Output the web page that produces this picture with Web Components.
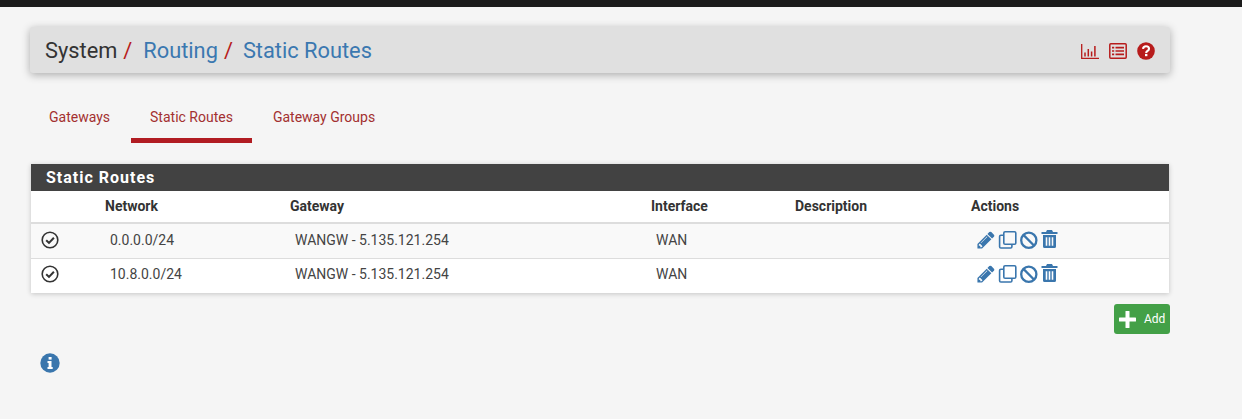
<!DOCTYPE html>
<html><head><meta charset="utf-8">
<style>
html,body{margin:0;padding:0;background:#f5f5f5;font-family:Roboto,sans-serif;color:#333;}
body{width:1242px;height:419px;overflow:hidden;}
</style></head><body>
<top-bar></top-bar>
<page-main>
  <bread-crumb></bread-crumb>
  <tab-bar></tab-bar>
  <routes-panel title="Static Routes">
    <route-row network="0.0.0.0/24" gateway="WANGW - 5.135.121.254" iface="WAN" shade></route-row>
    <route-row network="10.8.0.0/24" gateway="WANGW - 5.135.121.254" iface="WAN"></route-row>
  </routes-panel>
  <add-bar></add-bar>
  <info-mark></info-mark>
</page-main>
<script>
const PENCIL='<svg width="20" height="20" viewBox="0 0 1792 1792" fill="currentColor"><path d="M491 1536l91-91-235-235-91 91v107h128v128h107zm523-928q0-22-22-22-10 0-17 7l-542 542q-7 7-7 17 0 22 22 22 10 0 17-7l542-542q7-7 7-17zm-54-192l416 416-832 832h-416v-416zm683 96q0 53-37 90l-166 166-416-416 166-165q36-38 90-38 53 0 91 38l235 234q37 39 37 91z"/></svg>';
const CLONE='<svg style="margin-left:1px" width="20" height="20" viewBox="0 0 20 20" fill="none" stroke="currentColor" stroke-width="1.6"><rect x="5.800" y="1.800" width="12" height="12.500" rx="1.300"/><path d="M5.800 5.200H2.900A1.300 1.300 0 0 0 1.600 6.500v10.200a1.300 1.300 0 0 0 1.300 1.300h9.700a1.300 1.300 0 0 0 1.300-1.300v-2.400"/></svg>';
const BAN='<svg width="19" height="20" viewBox="0 0 19 20" fill="none" stroke="currentColor" stroke-width="2.300"><circle cx="9.800" cy="10.300" r="7.600"/><path d="M4.400 4.900l10.800 10.800"/></svg>';
const TRASH='<svg style="margin:0 0 2px 2px" width="17" height="20" viewBox="0 0 17 20" fill="currentColor"><path d="M6 1h5l1 2h4.500v2H.5V3H5z"/><path fill-rule="evenodd" d="M2 6h13v11.500a1.500 1.500 0 0 1-1.500 1.500h-10A1.500 1.500 0 0 1 2 17.500zm2.700 2.200v8.600h1.600V8.200zm3 0v8.600h1.600V8.200zm3 0v8.600h1.600V8.200z"/></svg>';
const CHECK='<svg width="18" height="18" viewBox="0 0 18 18" fill="none" stroke="#333" stroke-width="1.600"><circle cx="9" cy="9" r="7.800"/><path d="M5.200 9.200l2.800 2.700 4.900-5.200" stroke-width="2"/></svg>';

function def(name,html){
  customElements.define(name,class extends HTMLElement{
    connectedCallback(){
      if(this.shadowRoot)return;
      const r=this.attachShadow({mode:'open'});
      r.innerHTML=typeof html==='function'?html(this):html;
    }
  });
}
def('top-bar','<style>:host{display:block;height:7px;background:#1c1c1c}</style>');
def('page-main','<style>:host{display:block;width:1140px;padding:20px 0 0 30px}</style><slot></slot>');
def('bread-crumb',`<style>
:host{display:flex;align-items:center;justify-content:space-between;height:46px;padding:0 15px;box-sizing:border-box;background:#e0e0e0;border-radius:3px;box-shadow:0 2px 8px rgba(0,0,0,.3);font-size:21.800px;line-height:46px}
.t{display:flex;padding-top:1px}.s{color:#b71c1c;margin:0 11px 0 6px}.s2{margin-right:10px}.l{color:#3b78b0}
.ic{display:flex;align-items:center;color:#b71c1c;padding:2px 0 0}
svg{display:block}
</style>
<div class="t"><span>System</span><span class="s">/</span><span class="l">Routing</span><span class="s s2">/</span><span class="l">Static Routes</span></div>
<div class="ic">
<svg width="18" height="15" viewBox="0 0 18 15" fill="none" stroke="currentColor" style="margin-right:10px"><path d="M.7 0v14.300H18" stroke-width="1.300"/><path d="M4 12.500V8.500M7.300 12.500V5M10.600 12.500V7.500M13.900 12.500V2" stroke-width="1.500"/></svg>
<svg width="18" height="16" viewBox="0 0 18 16" fill="none" stroke="currentColor" style="margin-right:10px"><rect x=".8" y=".8" width="16.400" height="14.400" rx="1" stroke-width="1.500"/><path d="M3 4.700h2.200M3 8h2.200M3 11.300h2.200M6.500 4.700h8.500M6.500 8h8.500M6.500 11.300h8.500" stroke-width="1.700"/></svg>
<svg width="18" height="18" viewBox="0 0 18 18"><circle cx="9" cy="9" r="8.800" fill="currentColor"/><path d="M6 6.800C6.200 5 7.300 4.200 9 4.200c1.700 0 3 1 3 2.500 0 2.300-2.800 2.200-2.800 4.200" fill="none" stroke="#fff" stroke-width="2.100"/><rect x="8" y="11.900" width="2.400" height="2.300" fill="#fff"/></svg>
</div>`);
def('tab-bar',`<style>
:host{display:flex;margin-top:27px;height:43px;font-size:14px;color:#a33030}
div{box-sizing:border-box;height:43px;padding:0 19px;line-height:34px;white-space:nowrap}
.a{border-bottom:5px solid #b11c22}
</style><div style="padding-right:21px">Gateways</div><div class="a">Static Routes</div><div style="padding-left:21px">Gateway Groups</div>`);
def('routes-panel',t=>`<style>
:host{display:block;margin:21px 1px 0;background:#fff;box-shadow:0 1px 5px rgba(0,0,0,.2)}
.h{height:27px;background:#424242;color:#fff;font-size:16px;font-weight:700;line-height:27px;padding-left:15px;letter-spacing:1px}
.g{display:grid;grid-template-columns:69px 185px 361px 144px 176px 1fr;height:33px;box-sizing:border-box;border-bottom:2px solid #ddd;font-size:14px;font-weight:700;line-height:30px;color:#333}
.g span{padding-left:5px}
</style><div class="h">${t.getAttribute('title')}</div>
<div class="g"><span></span><span>Network</span><span>Gateway</span><span>Interface</span><span>Description</span><span>Actions</span></div><slot></slot>`);
def('route-row',t=>`<style>
:host{display:grid;grid-template-columns:69px 185px 361px 144px 176px 1fr;height:${t.hasAttribute('shade')?35:34}px;padding-bottom:${t.hasAttribute('shade')?3:4}px;align-items:center;font-size:14px;color:#444;box-sizing:border-box;background:${t.hasAttribute('shade')?'#f9f9f9':'#fff'};${t.hasAttribute('shade')?'border-bottom:1px solid #ddd;':''}}
span{padding-left:10px;white-space:nowrap}
.c{padding-left:10px;display:flex}
.a{display:flex;align-items:center;color:#3a76ad;padding-left:10px;gap:1px;height:20px}
svg{display:block;flex:none}
</style><div class="c">${CHECK}</div><span>${t.getAttribute('network')}</span><span>${t.getAttribute('gateway')}</span><span>${t.getAttribute('iface')}</span><span></span>
<div class="a">${PENCIL}${CLONE}${BAN}${TRASH}</div>`);
def('add-bar',`<style>
:host{display:flex;justify-content:flex-end;margin-top:11px}
div{display:flex;align-items:center;box-sizing:border-box;width:56px;height:30px;background:#43a047;border-radius:3px;color:#fff;font-size:12px;font-weight:400;padding-left:5px}
svg{margin-right:8px;display:block}
</style><div><svg width="17" height="17" viewBox="0 0 17 17" fill="#fff"><rect x="6.500" y="0" width="4" height="17" rx=".6"/><rect x="0" y="6.500" width="17" height="4" rx=".6"/></svg>Add</div>`);
def('info-mark',`<style>:host{display:block;margin:19px 0 0 10px;width:20px;height:20px}svg{display:block}</style>
<svg width="20" height="20" viewBox="0 0 20 20"><circle cx="10" cy="10" r="9.700" fill="#3a76ad"/><rect x="8.600" y="4" width="3" height="2.600" fill="#fff"/><path d="M7.500 8h4v6h1.200v2H7.500v-2h1.100v-4H7.500z" fill="#fff"/></svg>`);
</script>
</body></html>
